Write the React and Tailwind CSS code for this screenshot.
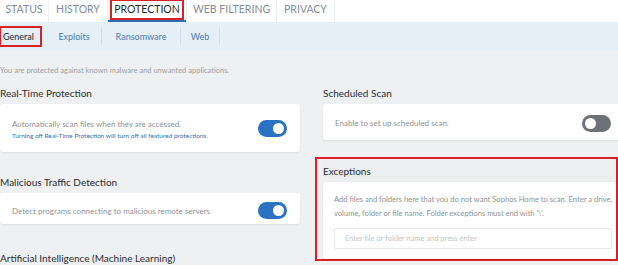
import React from "react";

const tabs = [
  { label: "STATUS", w: "w-[49px]" },
  { label: "HISTORY", w: "w-[59px]" },
  { label: "PROTECTION", w: "w-[79px]", active: true },
  { label: "WEB FILTERING", w: "w-[90px]" },
  { label: "PRIVACY", w: "w-[58px]" },
];

const subTabs = [
  { label: "Exploits", w: "w-[55px]" },
  { label: "Ransomware", w: "w-[79px]" },
  { label: "Web", w: "w-[39px]" },
];

function Toggle({ on }) {
  return (
    <div
      className={`flex h-[17px] w-[29px] shrink-0 items-center rounded-full px-[3px] ${
        on ? "justify-end bg-[#2c72c2]" : "justify-start bg-[#6e7276]"
      }`}
    >
      <div className="h-[11px] w-[11px] rounded-full bg-white" />
    </div>
  );
}

function Heading({ children }) {
  return (
    <div className="h-[14px] text-[10px] leading-[14px] text-[#2a2d30]">
      {children}
    </div>
  );
}

export default function App() {
  return (
    <div className="h-[265px] w-[618px] overflow-hidden bg-[#eef0f2] font-['Lato',sans-serif]">
      {/* main tabs */}
      <div className="flex h-[22px] bg-white">
        {tabs.map((t) => (
          <div
            key={t.label}
            className={`relative flex h-full items-start justify-center border-r border-[#eef0f2] pt-[3px] ${t.w}`}
          >
            <span
              className={`text-[10.5px] leading-[13px] ${
                t.active
                  ? "text-[#25282b] outline-2 outline-offset-[2px] outline-[#d9202a]"
                  : "text-[#838e99]"
              }`}
            >
              {t.label}
            </span>
            {t.active && (
              <div className="absolute bottom-0 left-0 h-[2px] w-full bg-[#2f6fb6]" />
            )}
          </div>
        ))}
      </div>

      {/* sub tabs */}
      <div className="flex h-[28px] items-center bg-[#e5eff8]">
        <div className="flex w-[47px] items-center pl-[3px]">
          <span className="pr-[4px] text-[9px] leading-[13px] text-[#1f2226] outline-2 outline-offset-[2px] outline-[#d9202a]">
            General
          </span>
        </div>
        {subTabs.map((t) => (
          <div
            key={t.label}
            className={`flex h-[18px] items-center justify-center border-r border-[#d5dfe9] ${t.w}`}
          >
            <span className="text-[9px] leading-[13px] text-[#4b7cb0]">{t.label}</span>
          </div>
        ))}
      </div>

      <div className="mt-[15px] h-[12px] text-[7.5px] leading-[12px] text-[#9a9fa5]">
        You are protected against known malware and unwanted applications.
      </div>

      <div className="mt-[9px] flex gap-[23px]">
        {/* left column */}
        <div className="flex w-[300px] shrink-0 flex-col">
          <Heading>Real-Time Protection</Heading>
          <div className="mt-[4px] flex h-[48px] items-center justify-between rounded-[3px] bg-white pl-[12px] pr-[13px] shadow-[0_1px_2px_rgba(0,0,0,0.08)]">
            <div className="flex flex-col pt-[2px]">
              <span className="text-[8px] leading-[12px] text-[#8e9398]">
                Automatically scan files when they are accessed.
              </span>
              <span className="text-[6.5px] leading-[11px] text-[#3b6fae]">
                Turning off Real-Time Protection will turn off all featured protections.
              </span>
            </div>
            <Toggle on />
          </div>

          <div className="mt-[23px]">
            <Heading>Malicious Traffic Detection</Heading>
          </div>
          <div className="mt-[4px] flex h-[31px] items-center justify-between rounded-[3px] bg-white pl-[12px] pr-[13px] pt-[4px] shadow-[0_1px_2px_rgba(0,0,0,0.08)]">
            <span className="text-[8px] leading-[12px] text-[#8e9398]">
              Detect programs connecting to malicious remote servers
            </span>
            <Toggle on />
          </div>

          <div className="mt-[27px]">
            <Heading>Artificial Intelligence (Machine Learning)</Heading>
          </div>
        </div>

        {/* right column */}
        <div className="flex w-[300px] shrink-0 flex-col">
          <Heading>Scheduled Scan</Heading>
          <div className="mt-[4px] flex h-[36px] items-center justify-between rounded-[3px] bg-white pl-[12px] pr-[12px] pt-[2px] shadow-[0_1px_2px_rgba(0,0,0,0.08)]">
            <span className="text-[8px] leading-[12px] text-[#8e9398]">
              Enable to set up scheduled scan.
            </span>
            <Toggle />
          </div>

          <div className="mr-[5px] -ml-[8px] mt-[17px] border-2 border-[#d9202a] pl-[6px]">
            <div className="flex h-[23px] items-center bg-[#eceef0]">
              <Heading>Exceptions</Heading>
            </div>
            <div className="rounded-[3px] bg-white px-[11px] pb-[10px] pt-[10px] shadow-[0_1px_2px_rgba(0,0,0,0.08)]">
              <p className="whitespace-nowrap text-[7.6px] leading-[14px] text-[#8e9398]">
                Add files and folders here that you do not want Sophos Home to scan. Enter a drive,
                <br />
                volume, folder or file name. Folder exceptions must end with '\'.
              </p>
              <div className="mt-[8px] flex h-[21px] w-[278px] items-center rounded-[2px] border border-[#e6e8ea] pl-[10px]">
                <span className="text-[7.5px] text-[#c3c6ca]">
                  Enter file or folder name and press enter
                </span>
              </div>
            </div>
          </div>
        </div>
      </div>
    </div>
  );
}
